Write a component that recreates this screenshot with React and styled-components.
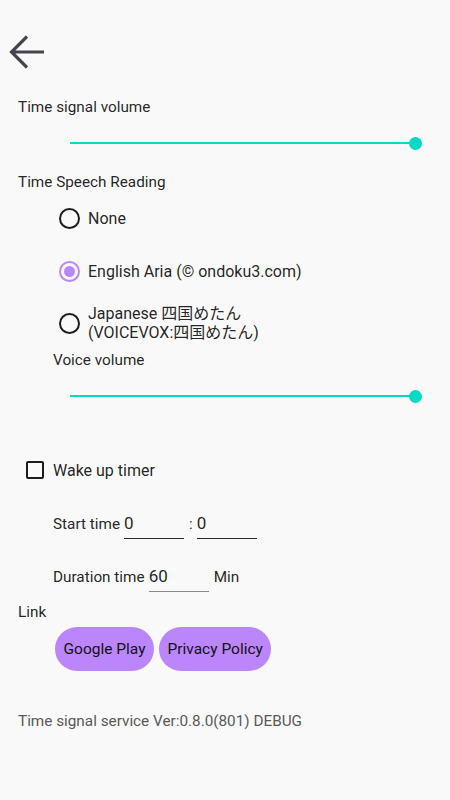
import React, { useState } from 'react';
import styled, { createGlobalStyle } from 'styled-components';

const GlobalStyle = createGlobalStyle`
  html, body {
    margin: 0;
    padding: 0;
    background: #f9f9f9;
  }
  body {
    font-family: Roboto, "Noto Sans CJK JP", "Noto Sans", sans-serif;
    color: rgba(0, 0, 0, 0.87);
  }
`;

const Page = styled.div`
  width: 450px;
  height: 800px;
  display: flex;
  flex-direction: column;
  background: #f9f9f9;
  overflow: hidden;
`;

const Header = styled.div`
  height: 97px;
  box-sizing: border-box;
  padding: 30px 0 0 4px;
`;

const BackButton = styled.button`
  width: 44px;
  height: 44px;
  padding: 0;
  border: none;
  background: none;
  display: flex;
  align-items: center;
  justify-content: center;
`;

const Row = styled.div`
  height: ${p => p.h}px;
  margin-top: ${p => p.mt || 0}px;
  padding-left: ${p => p.pl || 0}px;
  display: flex;
  align-items: center;
  gap: ${p => p.gap || 0}px;
  box-sizing: border-box;
`;

// section labels are a touch smaller than the option texts
const Label = styled.span`
  font-size: ${p => p.big ? 16 : 15.3}px;
  line-height: 19px;
  color: ${p => p.muted ? '#595959' : 'rgba(0, 0, 0, 0.87)'};
`;

const Track = styled.div`
  position: relative;
  margin-left: 70px;
  width: 345px;
  height: 2px;
  background: #03dac6;
`;

const Thumb = styled.div`
  position: absolute;
  right: -6.5px;
  top: -5.5px;
  width: 13px;
  height: 13px;
  border-radius: 50%;
  background: #03dac6;
`;

const RadioCircle = styled.span`
  flex: none;
  width: 21px;
  height: 21px;
  margin-left: 59px;
  margin-right: 8px;
  box-sizing: border-box;
  border-radius: 50%;
  border: 2px solid ${p => p.checked ? '#bb86fc' : '#1d1b20'};
  display: flex;
  align-items: center;
  justify-content: center;
  &::after {
    content: '';
    width: 11px;
    height: 11px;
    border-radius: 50%;
    background: #bb86fc;
    display: ${p => p.checked ? 'block' : 'none'};
  }
`;

const CheckBox = styled.span`
  flex: none;
  width: 18px;
  height: 18px;
  margin-left: 26px;
  margin-right: 9px;
  box-sizing: border-box;
  border: 2px solid #1d1b20;
  border-radius: 2px;
`;

const Field = styled.div`
  width: 60px;
  height: 30px;
  margin-left: ${p => p.ml || 0}px;
  box-sizing: border-box;
  border-bottom: 1px solid ${p => p.light ? '#8a8a8a' : '#2a2a2a'};
  font-size: 17px;
  line-height: 28px;
  color: rgba(0, 0, 0, 0.87);
`;

const Colon = styled.span`
  font-size: 15px;
  margin: 0 4px 0 5px;
`;

const Unit = styled(Label)`
  margin-left: 5px;
`;

const PillButton = styled.button`
  height: 44px;
  padding: 0 8.5px;
  border: none;
  border-radius: 22px;
  background: #bb86fc;
  font-family: Roboto, sans-serif;
  font-size: 15.5px;
  color: #111;
`;

const Slider = () => (
  <Track>
    <Thumb />
  </Track>
);

const options = [
  { id: 'none', text: 'None', h: 46 },
  { id: 'aria', text: 'English Aria (© ondoku3.com)', h: 60 },
  { id: 'metan', text: <>Japanese 四国めたん<br />(VOICEVOX:四国めたん)</>, h: 44 },
];

export default function App() {
  const [voice, setVoice] = useState('aria');

  return (
    <Page>
      <GlobalStyle />
      <Header>
        <BackButton aria-label="back">
          <svg width="44" height="44" viewBox="0 0 44 44">
            <path d="M40 22H8M23 6.5L7.5 22L23 37.5" fill="none" stroke="#49454f" strokeWidth="3.2" />
          </svg>
        </BackButton>
      </Header>

      <Row h={20} pl={18}><Label>Time signal volume</Label></Row>
      <Row h={52}><Slider /></Row>
      <Row h={26} pl={18}><Label>Time Speech Reading</Label></Row>

      {options.map(o => (
        <Row key={o.id} h={o.h} onClick={() => setVoice(o.id)}>
          <RadioCircle checked={voice === o.id} />
          <Label big>{o.text}</Label>
        </Row>
      ))}

      <Row h={30} pl={53}><Label>Voice volume</Label></Row>
      <Row h={42}><Slider /></Row>

      <Row h={40} mt={33}>
        <CheckBox />
        <Label big>Wake up timer</Label>
      </Row>

      <Row h={68} pl={53}>
        <Label>Start time</Label>
        <Field ml={4}>0</Field>
        <Colon>:</Colon>
        <Field>0</Field>
      </Row>

      <Row h={38} pl={53}>
        <Label>Duration time</Label>
        <Field ml={4} light>60</Field>
        <Unit>Min</Unit>
      </Row>

      <Row h={28} mt={2} pl={18}><Label>Link</Label></Row>

      <Row h={44} mt={1} pl={55} gap={5}>
        <PillButton>Google Play</PillButton>
        <PillButton>Privacy Policy</PillButton>
      </Row>

      <Row h={100} pl={18}><Label muted>Time signal service Ver:0.8.0(801) DEBUG</Label></Row>
    </Page>
  );
}
